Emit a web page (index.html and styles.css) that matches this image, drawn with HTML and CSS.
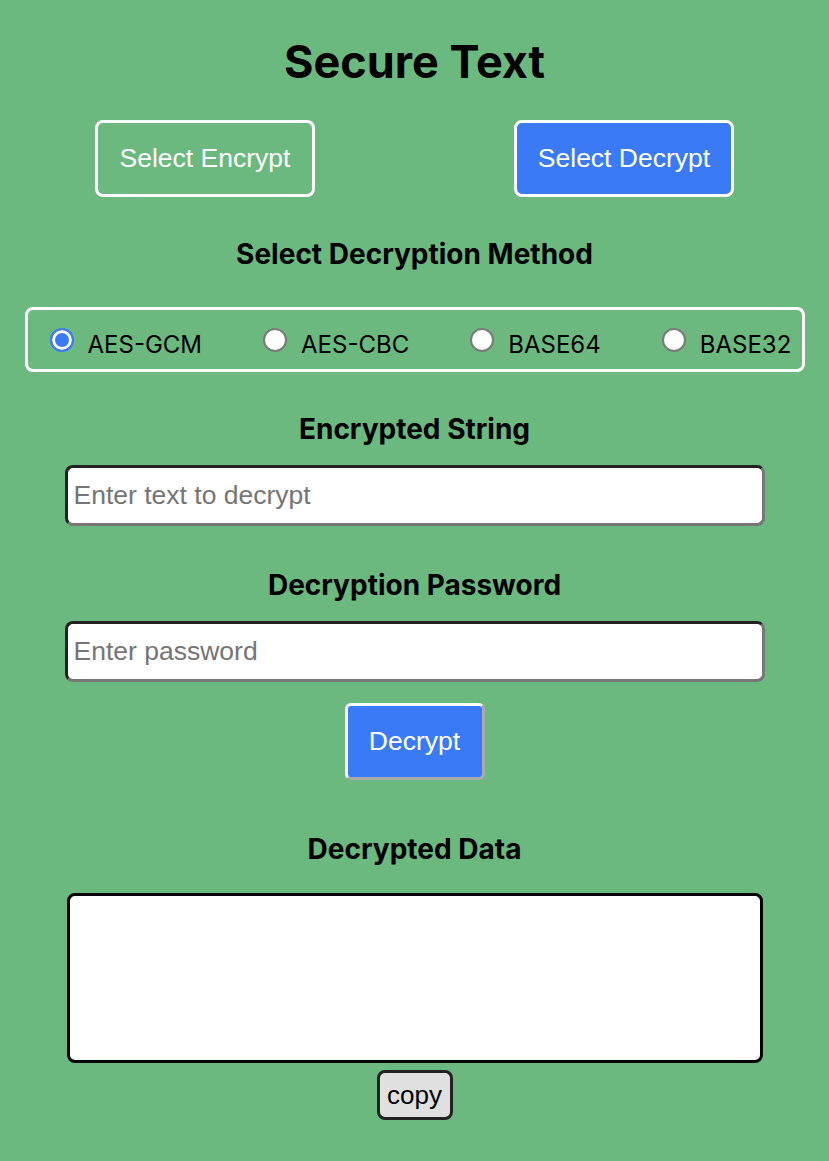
FILE: index.html
```html
<!DOCTYPE html>
<html lang="en">
<head>
<meta charset="utf-8">
<title>Secure Text</title>
<link rel="stylesheet" href="styles.css">
</head>
<body>
<main class="page">
  <h1 class="title">Secure Text</h1>
  <div class="mode-row">
    <button class="mode-btn" type="button">Select Encrypt</button>
    <button class="mode-btn active" type="button">Select Decrypt</button>
  </div>
  <h2 class="heading heading-method">Select Decryption Method</h2>
  <div class="methods">
    <label class="method"><input type="radio" name="method" checked><span>AES-GCM</span></label>
    <label class="method"><input type="radio" name="method"><span>AES-CBC</span></label>
    <label class="method"><input type="radio" name="method"><span>BASE64</span></label>
    <label class="method"><input type="radio" name="method"><span>BASE32</span></label>
  </div>
  <h2 class="heading heading-string">Encrypted String</h2>
  <input class="field" type="text" placeholder="Enter text to decrypt">
  <h2 class="heading heading-pass">Decryption Password</h2>
  <input class="field" type="password" placeholder="Enter password">
  <button class="action-btn" type="button">Decrypt</button>
  <h2 class="heading heading-data">Decrypted Data</h2>
  <textarea class="output"></textarea>
  <button class="copy-btn" type="button">copy</button>
</main>
</body>
</html>
```
FILE: styles.css
```css
html, body {
  margin: 0;
  padding: 0;
  background: #6bb97e;
}
body {
  min-height: 1161px;
}
.page {
  display: flex;
  flex-direction: column;
  align-items: center;
  padding-top: 38px;
  font-family: Inter, "Liberation Sans", sans-serif;
  color: #000;
}
.title {
  margin: 0;
  font-size: 45px;
  line-height: 48px;
  font-weight: 700;
}
.mode-row {
  display: flex;
  gap: 199px;
  margin-top: 34px;
}
.mode-btn {
  width: 220px;
  height: 77px;
  border: 3px solid #fff;
  border-radius: 8px;
  background: transparent;
  color: #fff;
  font-family: "Liberation Sans", Arial, sans-serif;
  font-size: 26.5px;
  padding: 0;
}
.mode-btn.active {
  background: #3a7bf5;
}
.heading {
  margin: 0;
  font-size: 28px;
  line-height: 30px;
  font-weight: 700;
}
.heading-method { margin-top: 42px; }
.heading-string { margin-top: 42px; }
.heading-pass { margin-top: 44px; }
.heading-data { margin-top: 54px; }
.methods {
  box-sizing: border-box;
  width: 780px;
  height: 65px;
  margin-top: 38px;
  border: 3px solid #fff;
  border-radius: 8px;
  display: flex;
  align-items: center;
  gap: 61px;
  padding-left: 22px;
}
.method {
  display: flex;
  align-items: center;
  gap: 14px;
  font-size: 24px;
}
.method span {
  position: relative;
  top: 5px;
}
.method input {
  appearance: none;
  -webkit-appearance: none;
  margin: 0;
  width: 24px;
  height: 24px;
  border-radius: 50%;
  border: 2px solid #7a7a7a;
  background: #fff;
  box-sizing: border-box;
}
.method input:checked {
  border-color: #3a7bf5;
  background: #3a7bf5;
  box-shadow: inset 0 0 0 3px #fff;
}
.field {
  box-sizing: border-box;
  width: 700px;
  height: 61px;
  margin-top: 21px;
  border: 3px solid;
  border-color: #222 #777 #777 #222;
  border-radius: 8px;
  background: #fff;
  padding: 0 6px;
  font-family: "Liberation Sans", Arial, sans-serif;
  font-size: 26.5px;
  color: #000;
}
.field::placeholder {
  color: #757575;
}
.action-btn {
  box-sizing: border-box;
  width: 140px;
  height: 77px;
  margin-top: 21px;
  border: 3px solid;
  border-color: #fff #aaa #aaa #fff;
  border-radius: 6px;
  background: #3a7bf5;
  color: #fff;
  font-family: "Liberation Sans", Arial, sans-serif;
  font-size: 26.5px;
  padding: 0;
}
.output {
  box-sizing: border-box;
  width: 696px;
  height: 170px;
  margin-top: 29px;
  border: 3px solid #000;
  border-radius: 8px;
  background: #fff;
  resize: none;
  display: block;
}
.copy-btn {
  box-sizing: border-box;
  width: 76px;
  height: 50px;
  margin-top: 7px;
  border: 3px solid #222;
  border-radius: 8px;
  background: #e0e0e0;
  color: #000;
  font-family: "Liberation Sans", Arial, sans-serif;
  font-size: 26px;
  padding: 0;
}
```
